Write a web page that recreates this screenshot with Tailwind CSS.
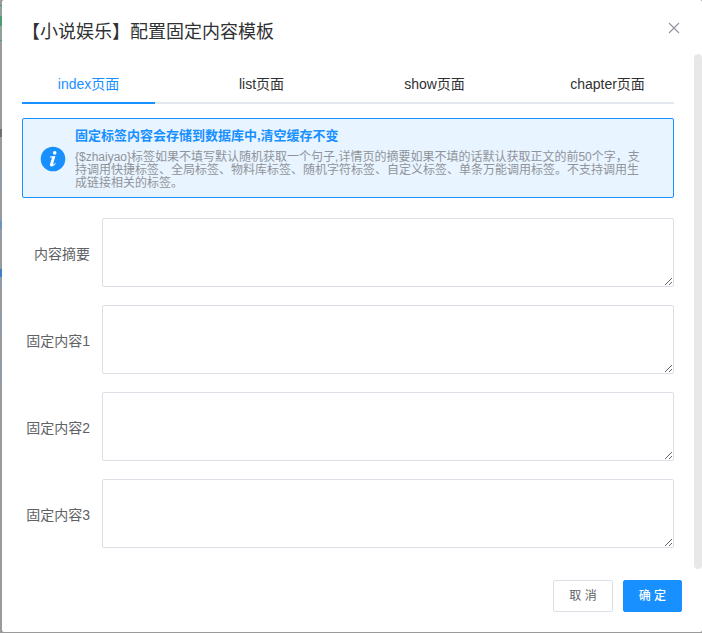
<!DOCTYPE html>
<html lang="zh-CN">
<head>
    <meta charset="UTF-8">
    <meta name="viewport" content="width=device-width, initial-scale=1.0">
    <title>配置固定内容模板</title>
    <script src="https://cdn.jsdelivr.net/npm/@tailwindcss/browser@4"></script>
</head>
<body class="min-h-screen bg-[#9a9a9a] flex font-['Liberation_Sans','Noto_Sans_CJK_SC',sans-serif]">

    <!-- Page behind the dialog -->
    <div class="w-[2px] shrink-0 flex flex-col">
        <div class="h-[5px]"></div>
        <div class="h-9 py-2.5 bg-[#8fa398] border-y border-[#4f9a72]">
            <div class="h-2.5 bg-[#4f9a72]"></div>
        </div>
        <div class="h-[124px] pt-[88px]">
            <div class="h-2 bg-[#707070]"></div>
        </div>
        <div class="h-6 bg-[#8f9ca8]"></div>
        <div class="h-6"></div>
        <div class="h-6 py-2 bg-[#8f9ca8]">
            <div class="h-2 bg-[#6f93bd]"></div>
        </div>
        <div class="h-6"></div>
        <div class="h-6 py-2 bg-[#8f9ca8]">
            <div class="h-2 bg-[#3f7fc4]"></div>
        </div>
        <div class="h-6"></div>
        <div class="h-6 bg-[#8f9ca8]"></div>
        <div class="h-6"></div>
        <div class="h-6 bg-[#8f9ca8]"></div>
    </div>

    <!-- Dialog -->
    <div role="dialog" aria-labelledby="dialogTitle" class="flex-1 mb-px bg-white rounded-xs flex flex-col">
        <header class="flex justify-between items-start pt-5 pl-5 pr-[22px] pb-2.5">
            <h1 id="dialogTitle" class="text-lg leading-6 text-[#303133]">【小说娱乐】配置固定内容模板</h1>
            <button type="button" aria-label="关闭" class="pt-0.5 text-[#909399]">
                <svg class="w-3 h-3" viewBox="0 0 12 12" fill="none" stroke="currentColor" stroke-width="1.1"><path d="M1 1L11 11M11 1L1 11"/></svg>
            </button>
        </header>

        <div class="flex-1 flex pl-5">
            <div class="flex-1 pt-3 pb-5">
                <!-- Tabs -->
                <nav class="grid grid-cols-4 gap-x-10 text-center text-sm leading-9 text-[#303133] border-b-2 border-[#e4e7ed]">
                    <a href="#" class="-mb-0.5 border-b-2 border-[#1890ff] text-[#1890ff]">index页面</a>
                    <a href="#">list页面</a>
                    <a href="#">show页面</a>
                    <a href="#">chapter页面</a>
                </nav>

                <!-- Notice -->
                <div class="mt-3.5 flex items-center pl-[17px] pr-8 pt-2 pb-[7px] rounded-xs border border-[#1890ff] bg-[#e8f4ff]">
                    <svg class="w-[26px] h-[26px] shrink-0" viewBox="0 0 26 26">
                        <circle cx="13" cy="13" r="12.3" fill="#1890ff"/>
                        <circle cx="14.7" cy="6.9" r="1.8" fill="#fff"/>
                        <path d="M10 10.6L15.4 10.1L13.2 17.8C13 18.6 13.4 18.7 14 18.2L15.2 17L15.8 17.5C14.4 19.6 12.9 20.4 11.6 20.4C10.2 20.4 9.7 19.4 10.1 18L11.9 11.9C12 11.5 11.6 11.4 9.9 11.4Z" fill="#fff"/>
                    </svg>
                    <div class="ml-[9px]">
                        <p class="text-[13px] leading-[18px] font-bold text-[#1890ff]">固定标签内容会存储到数据库中,清空缓存不变</p>
                        <p class="mt-1.5 text-xs leading-[13px] text-[#909399]">{$zhaiyao}标签如果不填写默认随机获取一个句子,详情页的摘要如果不填的话默认获取正文的前50个字，支持调用快捷标签、全局标签、物料库标签、随机字符标签、自定义标签、单条万能调用标签。不支持调用生成链接相关的标签。</p>
                    </div>
                </div>

                <!-- Form -->
                <form id="contentForm" class="mt-5 flex flex-col gap-[18px] text-sm text-[#606266]">
                    <div class="flex items-center">
                        <label for="summary" class="w-20 pt-0.5 pr-3 text-right">内容摘要</label>
                        <textarea id="summary" class="flex-1 h-[69px] resize-y rounded-xs border border-[#dcdfe6] px-4 py-1"></textarea>
                    </div>
                    <div class="flex items-center">
                        <label for="content1" class="w-20 pt-0.5 pr-3 text-right">固定内容1</label>
                        <textarea id="content1" class="flex-1 h-[69px] resize-y rounded-xs border border-[#dcdfe6] px-4 py-1"></textarea>
                    </div>
                    <div class="flex items-center">
                        <label for="content2" class="w-20 pt-0.5 pr-3 text-right">固定内容2</label>
                        <textarea id="content2" class="flex-1 h-[69px] resize-y rounded-xs border border-[#dcdfe6] px-4 py-1"></textarea>
                    </div>
                    <div class="flex items-center">
                        <label for="content3" class="w-20 pt-0.5 pr-3 text-right">固定内容3</label>
                        <textarea id="content3" class="flex-1 h-[69px] resize-y rounded-xs border border-[#dcdfe6] px-4 py-1"></textarea>
                    </div>
                </form>
            </div>
            <!-- Scrollbar -->
            <div class="ml-5 w-2 rounded-full bg-[#e8e8e8]"></div>
        </div>

        <footer class="flex justify-end gap-2.5 px-5 pt-[11px] pb-5 text-xs">
            <button type="button" class="h-8 px-[15px] rounded-xs border border-[#dcdfe6] text-[#606266]">取 消</button>
            <button type="submit" form="contentForm" class="h-8 px-[15px] rounded-xs border border-[#1890ff] bg-[#1890ff] font-medium text-white">确 定</button>
        </footer>
    </div>

</body>
</html>
